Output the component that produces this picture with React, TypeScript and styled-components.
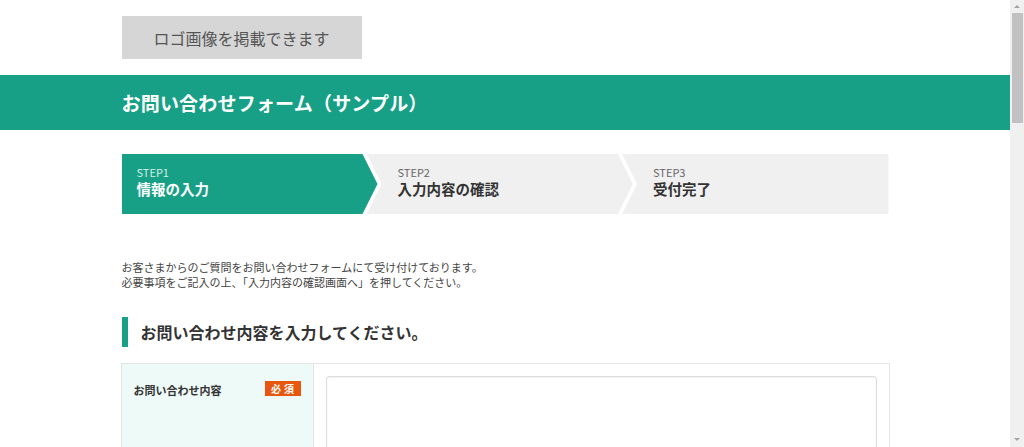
import React from "react";
import styled, { createGlobalStyle, css } from "styled-components";

const GREEN = "#17a086";

const GlobalStyle = createGlobalStyle`
  html, body {
    margin: 0;
    padding: 0;
    background: #fff;
  }
  body {
    font-family: "Noto Sans CJK JP", "Noto Sans", sans-serif;
    color: #333;
  }
  * { box-sizing: border-box; }
`;

const Page = styled.div`
  margin-right: 14px;
  min-height: 1700px;
`;

/* Classic browser scrollbar seen on the right edge of the screenshot */
const ScrollTrack = styled.div`
  position: fixed;
  top: 0;
  right: 0;
  width: 14px;
  height: 100vh;
  background: #f0f0f0;
  display: flex;
  flex-direction: column;
  align-items: center;
`;

const ScrollArrow = styled.span<{ $down?: boolean }>`
  width: 0;
  height: 0;
  border-left: 3px solid transparent;
  border-right: 3px solid transparent;
  ${(p) =>
    p.$down
      ? css`
          border-top: 3px solid #a3a3a3;
          margin-top: auto;
          margin-bottom: 6px;
        `
      : css`
          border-bottom: 3px solid #a3a3a3;
          margin-top: 5px;
        `}
`;

const ScrollThumb = styled.span`
  position: absolute;
  top: 13px;
  left: 2px;
  width: 11px;
  height: 110px;
  background: #c1c1c1;
`;

const Container = styled.div`
  width: 767px;
  margin: 0 auto;
`;

const TopBar = styled(Container)`
  padding: 16px 0;
`;

const LogoBox = styled.div`
  width: 240px;
  height: 43px;
  background: #d6d6d6;
  color: #555;
  font-size: 16px;
  display: flex;
  align-items: center;
  justify-content: center;
  line-height: 1;
`;

const Header = styled.header`
  background: ${GREEN};
  height: 55px;
  display: flex;
  align-items: center;
`;

const Title = styled.h1`
  margin: 0;
  font-size: 19px;
  font-weight: 700;
  color: #fff;
  line-height: 1;
  letter-spacing: 0.2px;
`;

const Steps = styled.ol`
  list-style: none;
  margin: 24px auto 0;
  padding: 0;
  width: 767px;
  display: flex;
  height: 60px;
`;

type StepProps = { $active?: boolean; $pos: "first" | "middle" | "last" };

const clipFor = (pos: StepProps["$pos"]) => {
  if (pos === "first")
    return "polygon(0 0, calc(100% - 15px) 0, 100% 50%, calc(100% - 15px) 100%, 0 100%)";
  if (pos === "middle")
    return "polygon(0 0, calc(100% - 15px) 0, 100% 50%, calc(100% - 15px) 100%, 0 100%, 15px 50%)";
  return "polygon(0 0, 100% 0, 100% 100%, 0 100%, 15px 50%)";
};

const Step = styled.li<StepProps>`
  display: flex;
  flex-direction: column;
  justify-content: center;
  padding-bottom: 4px;
  clip-path: ${(p) => clipFor(p.$pos)};
  background: ${(p) => (p.$active ? GREEN : "#f0f0f0")};
  color: ${(p) => (p.$active ? "#fff" : "#333")};
  ${(p) =>
    p.$pos === "first"
      ? css`
          flex: 0 0 256px;
          padding-left: 15px;
        `
      : css`
          flex: 1 1 0;
          margin-left: -11px;
          padding-left: 31px;
        `}
`;

const StepLabel = styled.span<{ $active?: boolean }>`
  font-size: 11px;
  line-height: 14px;
  color: ${(p) => (p.$active ? "#d4eee8" : "#666")};
`;

const StepTitle = styled.span`
  font-size: 14.5px;
  line-height: 20px;
  font-weight: 700;
`;

const Intro = styled.p`
  margin: 46px 0 0;
  font-size: 11px;
  line-height: 15px;
  color: #444;
`;

const SectionHeading = styled.h2`
  margin: 27px 0 0;
  border-left: 6px solid ${GREEN};
  padding-left: 13px;
  height: 30px;
  display: flex;
  align-items: center;
  font-size: 16px;
  font-weight: 700;
  color: #333;
  line-height: 1;
`;

const FormTable = styled.div`
  margin: 16px 0 40px -1px;
  width: 769px;
  border: 1px solid #e6e6e6;
  display: grid;
  grid-template-columns: 192px 1fr;
`;

const LabelCell = styled.div`
  background: #eefaf8;
  border-right: 1px solid #e6e6e6;
  padding: 17px 12px 0 12px;
  display: flex;
  justify-content: space-between;
  align-items: flex-start;
`;

const LabelText = styled.span`
  font-size: 11px;
  font-weight: 700;
  color: #333;
  line-height: 15px;
  margin-top: 2px;
`;

const Badge = styled.span`
  background: #e8570e;
  color: #fff;
  font-size: 10px;
  font-weight: 700;
  width: 36px;
  height: 15px;
  display: flex;
  align-items: center;
  justify-content: center;
  letter-spacing: 3px;
  padding-left: 3px;
  line-height: 1;
`;

const FieldCell = styled.div`
  padding: 12px;
`;

const TextArea = styled.textarea`
  display: block;
  width: 100%;
  height: 200px;
  border: 1px solid #ddd;
  border-radius: 3px;
  box-shadow: inset 0 1px 2px rgba(0, 0, 0, 0.06);
  resize: none;
  font-family: inherit;
  font-size: 12px;
  outline: none;
`;

export default function App() {
  return (
    <Page>
      <GlobalStyle />
      <TopBar>
        <LogoBox>ロゴ画像を掲載できます</LogoBox>
      </TopBar>
      <Header>
        <Container>
          <Title>お問い合わせフォーム（サンプル）</Title>
        </Container>
      </Header>
      <Steps>
        <Step $active $pos="first">
          <StepLabel $active>STEP1</StepLabel>
          <StepTitle>情報の入力</StepTitle>
        </Step>
        <Step $pos="middle">
          <StepLabel>STEP2</StepLabel>
          <StepTitle>入力内容の確認</StepTitle>
        </Step>
        <Step $pos="last">
          <StepLabel>STEP3</StepLabel>
          <StepTitle>受付完了</StepTitle>
        </Step>
      </Steps>
      <Container>
        <Intro>
          お客さまからのご質問をお問い合わせフォームにて受け付けております。
          <br />
          必要事項をご記入の上、「入力内容の確認画面へ」を押してください。
        </Intro>
        <SectionHeading>お問い合わせ内容を入力してください。</SectionHeading>
        <FormTable>
          <LabelCell>
            <LabelText>お問い合わせ内容</LabelText>
            <Badge>必須</Badge>
          </LabelCell>
          <FieldCell>
            <TextArea />
          </FieldCell>
        </FormTable>
      </Container>
      <ScrollTrack>
        <ScrollArrow />
        <ScrollThumb />
        <ScrollArrow $down />
      </ScrollTrack>
    </Page>
  );
}
